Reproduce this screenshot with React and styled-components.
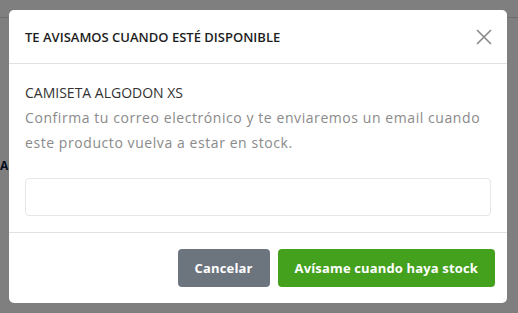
import React from "react";
import styled, { createGlobalStyle } from "styled-components";

const Global = createGlobalStyle`
  html, body {
    margin: 0;
    padding: 0;
    background: #fff;
    font-family: "Open Sans", "Liberation Sans", sans-serif;
  }
`;

const Page = styled.div`
  position: relative;
  width: 518px;
  height: 313px;
  overflow: hidden;
`;

const PageTop = styled.div`
  height: 17px;
  border-bottom: 1px solid #ddd;
`;

const PageText = styled.div`
  margin-top: 139px;
  font-weight: 700;
  font-size: 12px;
  color: #0b1a3a;
`;

const Backdrop = styled.div`
  position: absolute;
  inset: 0;
  background: rgba(0, 0, 0, 0.5);
  display: flex;
  align-items: flex-start;
  padding: 10px 11px 0 9px;
`;

const Modal = styled.div`
  width: 100%;
  background: #fff;
  border-radius: 5px;
  display: flex;
  flex-direction: column;
`;

const Header = styled.div`
  height: 53px;
  display: flex;
  align-items: center;
  justify-content: space-between;
  padding: 0 15px 0 16px;
  border-bottom: 1px solid #e2e2e2;
`;

const Title = styled.h5`
  margin: 0;
  font-size: 13px;
  font-weight: 600;
  color: #1e1e1e;
  letter-spacing: 0;
`;

const Close = styled.button`
  border: 0;
  background: none;
  padding: 0;
  width: 16px;
  height: 16px;
  display: flex;
  cursor: pointer;
`;

const Body = styled.div`
  padding: 16px;
`;

const Product = styled.div`
  font-size: 14px;
  line-height: 25px;
  color: #333;
`;

const Text = styled.p`
  margin: 0;
  font-size: 14px;
  line-height: 25px;
  color: #8a8a8a;
  letter-spacing: 0.57px;
`;

const Input = styled.input`
  display: block;
  box-sizing: border-box;
  width: 100%;
  height: 38px;
  margin-top: 23px;
  border: 1px solid #e6e6e6;
  border-radius: 4px;
  outline: none;
`;

const Footer = styled.div`
  display: flex;
  justify-content: flex-end;
  gap: 8px;
  padding: 16px 12px 16px 16px;
  border-top: 1px solid #e2e2e2;
`;

const Button = styled.button`
  height: 38px;
  padding: 0 ${(p) => p.$pad}px;
  border: 0;
  border-radius: 4px;
  background: ${(p) => p.$bg};
  color: #fff;
  font-family: "Open Sans", "Liberation Sans", sans-serif;
  font-size: 13px;
  font-weight: 700;
  letter-spacing: 0.15px;
  cursor: pointer;
`;

export default function App() {
  return (
    <Page>
      <Global />
      <PageTop />
      <PageText>ANADIR</PageText>
      <Backdrop>
        <Modal>
          <Header>
            <Title>TE AVISAMOS CUANDO ESTÉ DISPONIBLE</Title>
            <Close aria-label="Cerrar">
              <svg width="16" height="16" viewBox="0 0 16 16">
                <path d="M1 1L15 15M15 1L1 15" stroke="#8a8a8a" strokeWidth="1.6" />
              </svg>
            </Close>
          </Header>
          <Body>
            <Product>CAMISETA ALGODON XS</Product>
            <Text>
              Confirma tu correo electrónico y te enviaremos un email cuando este producto vuelva a estar en stock.
            </Text>
            <Input type="email" />
          </Body>
          <Footer>
            <Button $bg="#6c747e" $pad={17}>Cancelar</Button>
            <Button $bg="#44a11d" $pad={17}>Avísame cuando haya stock</Button>
          </Footer>
        </Modal>
      </Backdrop>
    </Page>
  );
}
